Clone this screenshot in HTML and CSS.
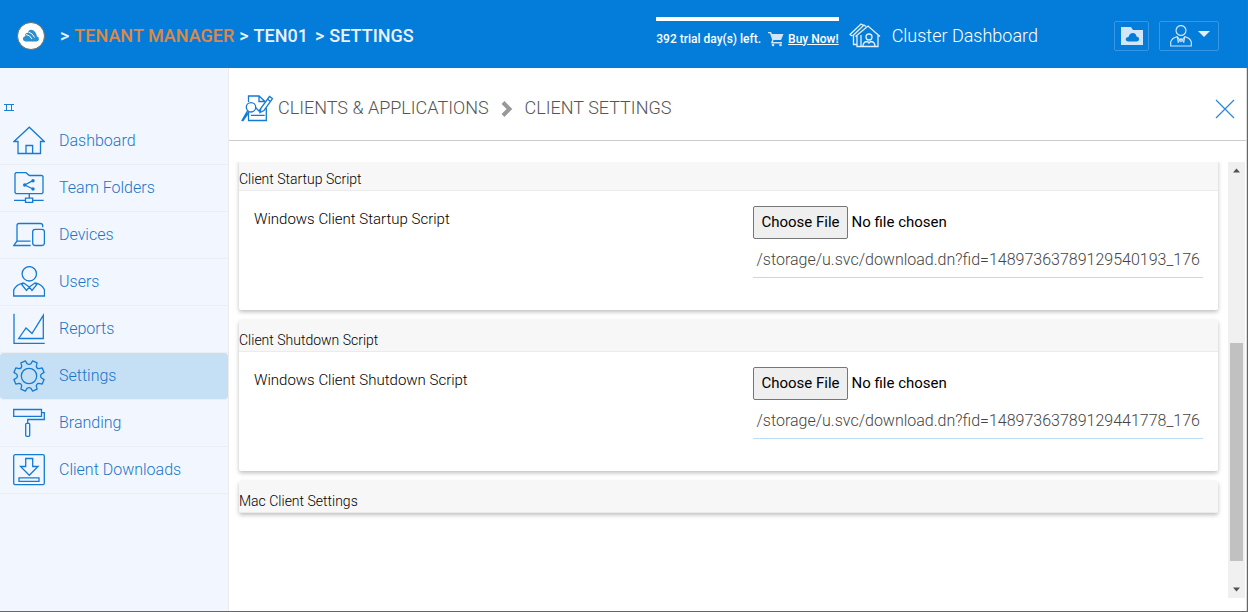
FILE: index.html
```html
<!DOCTYPE html>
<html lang="en">
<head>
<meta charset="utf-8">
<title>Tenant Manager - Client Settings</title>
<link rel="stylesheet" href="styles.css">
</head>
<body>
<header class="topbar">
  <svg class="logo" viewBox="0 0 28 28">
    <circle cx="14" cy="14" r="13.5" fill="#fff" stroke="#6b7469"/>
    <path d="M8.500 19.500Q5.800 19 5.800 16.700Q6 14.500 8.500 14Q7.500 12.500 9 11.300Q10 10.500 11.500 10.800Q10.500 9 13 8Q16.500 7.300 18.500 10.500Q19.700 12.300 19.800 14.300Q22 15 22 17.200Q21.800 19.300 19.500 19.500Z" fill="#2a8fcc"/>
    <path d="M9 12.500Q13 13 15 17M11.500 10Q16 11.500 17.500 15.500" fill="none" stroke="#fff"/>
  </svg>
  <nav class="crumbs">
    <span>&gt;</span>
    <a class="tenant" href="#">TENANT MANAGER</a>
    <span>&gt;</span>
    <a href="#">TEN01</a>
    <span class="last-sep">&gt;</span>
    <a href="#">SETTINGS</a>
  </nav>
  <div class="trial">
    <div class="trial-bar"></div>
    <div class="trial-info">
      <span>392 trial day(s) left.</span>
      <svg class="cart" viewBox="0 0 16 16" fill="#d3e6f7">
        <path d="M0 1H3L4 3H15.500L13 9H5.500L5 11H14V12.500H3.500L3 11.500L4.200 9L2 2.200H0Z"/>
        <circle cx="5" cy="14" r="1.300"/><circle cx="12.500" cy="14" r="1.300"/>
      </svg>
      <a href="#">Buy Now!</a>
    </div>
  </div>
  <a class="cluster" href="#">
    <svg viewBox="0 0 32 26" fill="none" stroke="#e3effa" stroke-width="1.300">
      <path d="M8 12V23.500H29V12M6.500 13.500L19 3L31 13.500M4.500 12V21.500H7.500M3 13L1 11.500L12 1L14.500 2.500M3.500 13L15 2L17 3.500M12 12V23M8 13V20"/>
      <circle cx="20" cy="14" r="3"/>
      <path d="M14 23.500Q14 18.500 18.500 18.500L20 20L21.500 18.500Q26 18.500 26 23.500"/>
    </svg>
    Cluster Dashboard
  </a>
  <div class="actions">
    <button class="top-btn folder-btn" aria-label="Cloud folder">
      <svg viewBox="0 0 22 18">
        <path d="M0 0H10L12 3H22V18H0Z" fill="#d3e6f7"/>
        <path d="M7 14.500Q4.500 14 4.700 12Q5 10 7.500 10Q8.500 6 12 6Q15 6.300 15.500 9.500Q18 9.500 18.200 12Q18 14.300 16 14.500Z" fill="#047cd9"/>
      </svg>
    </button>
    <button class="top-btn user-btn" aria-label="Account">
      <svg class="user" viewBox="0 0 32 32" fill="none" stroke="#d3e6f7" stroke-width="1.700">
        <circle cx="16" cy="8" r="7.200"/>
        <path d="M1 30.500V24.500Q3 19 10.500 17L16 24L21.500 17Q29 19 31 24.500V30.500ZM10.500 17L12 25L16 20L20 25L21.500 17"/>
      </svg>
      <svg class="caret" viewBox="0 0 12 6"><path d="M0 0H12L6 6Z" fill="#e3effa"/></svg>
    </button>
  </div>
</header>

<div class="page">
  <nav class="sidebar">
    <button class="toggle" aria-label="Toggle menu">
      <svg viewBox="0 0 10 7" fill="none" stroke="#1b7fd6"><path d="M0 .5H10M0 6.500H10M2.500 .5V6.500M7.500 .5V6.500"/></svg>
    </button>
    <a class="item" href="#">
      <svg viewBox="0 0 32 32"><path d="M5 16.500H1L16.300 2.200L31.300 16.500H27.500V28.500H5ZM13 28.500V20.500H19.600V28.500"/></svg>
      Dashboard
    </a>
    <a class="item" href="#">
      <svg viewBox="0 0 32 32"><path d="M3 .7H13L16.300 3.500H29L30 4.500V20.500L29 21.600H3L2 20.500V1.700ZM16.300 21.600V26M12.500 26.200H19.700V30.300H12.500ZM1 28.300H12.500M19.700 28.300H30.700M20 8.700L11.700 13L20 17"/><g fill="#147ad3" stroke="none"><circle cx="11.700" cy="13" r="1.700"/><circle cx="20" cy="8.700" r="1.700"/><circle cx="20" cy="17" r="1.700"/></g></svg>
      Team Folders
    </a>
    <a class="item" href="#">
      <svg viewBox="0 0 32 32"><path d="M29.700 8.300V6.500Q29.500 4.500 27.500 4.500H6Q4 4.500 4 6.500V22L.8 26.500H17.700M4 22.200H17.500"/><rect x="19.700" y="10.300" width="11.700" height="16.200" rx="2.500"/></svg>
      Devices
    </a>
    <a class="item" href="#">
      <svg viewBox="0 0 32 32"><circle cx="16.300" cy="7.800" r="7.200"/><path d="M10.300 16.800Q3 18.500 .7 24V30H31.500V24Q29.500 18.500 22.300 16.800M10.300 16.800L16.300 21L22.300 16.800M10.300 16.800L9 19L13.500 24.500L16.300 21L19 24.500L23.500 19L22.300 16.800"/></svg>
      Users
    </a>
    <a class="item" href="#">
      <svg viewBox="0 0 32 32"><path d="M1 .7V30.300H31.700M5.700 25.500L13 15L19 20.500L30.300 2.300V25.500Z"/></svg>
      Reports
    </a>
    <a class="item active" href="#">
      <svg viewBox="0 0 32 32"><path stroke-linejoin="round" d="M17.800 3.800L19.600 .9L24.100 2.800L23.300 6.100Q23.500 8.500 25.900 8.700L29.200 7.900L31.100 12.400L28.200 14.200Q27 16 28.200 17.800L31.100 19.600L29.200 24.100L25.900 23.300Q23.500 23.500 23.300 25.900L24.100 29.200L19.600 31.100L17.800 28.200Q16 27 14.200 28.200L12.400 31.100L7.900 29.200L8.700 25.900Q8.500 23.500 6.100 23.300L2.800 24.100L.9 19.600L3.800 17.800Q5 16 3.800 14.200L.9 12.400L2.800 7.900L6.100 8.700Q8.500 8.500 8.700 6.100L7.900 2.800L12.400 .9L14.200 3.800Q16 5 17.800 3.800Z"/><circle cx="16" cy="16" r="7.700"/></svg>
      Settings
    </a>
    <a class="item" href="#">
      <svg viewBox="0 0 32 32"><path d="M.7 2.500H28.500V9.300H.7ZM28.500 5.700H31.300V12.500H14.700V16.300"/><rect x="12.700" y="16.300" width="4" height="13" rx="1"/></svg>
      Branding
    </a>
    <a class="item" href="#">
      <svg viewBox="0 0 32 32"><rect x=".7" y=".7" width="30.600" height="30" rx="1.500"/><path d="M12.700 4.500H19.700V12.500H25L16.300 21.300L7.500 12.500H12.700ZM6 23.800H26V27.300H6Z"/></svg>
      Client Downloads
    </a>
  </nav>

  <main class="content">
    <div class="content-head">
      <svg class="head-icon" viewBox="0 0 32 28" fill="none" stroke="#147ad3" stroke-width="1.300">
        <path d="M7.500 7V1H18L24 6.500M18 1V6.500H24M25.300 13V25.500H7.500V17.500M10 20.300H23.700"/>
        <circle cx="10" cy="12.300" r="4.700"/>
        <path d="M6.500 16L.8 26M8 17L1.500 26" stroke-width="1.500"/>
        <path d="M19 17.500L20 13L28.500 1.500L31.500 3.700L23 15.500ZM26.500 4L29.500 6.500M14.500 12.500L18 16L20 13"/>
      </svg>
      <a href="#">CLIENTS &amp; APPLICATIONS</a>
      <svg class="chevron" viewBox="0 0 12 16"><path d="M2 1.500L8.500 8L2 14.500" fill="none" stroke="#999" stroke-width="4"/></svg>
      <h1>CLIENT SETTINGS</h1>
      <button class="close" aria-label="Close">
        <svg viewBox="0 0 20 20"><path d="M1 1L19 19M19 1L1 19" stroke="#2a86d8" stroke-width="1.200"/></svg>
      </button>
    </div>

    <div class="scroll-area">
      <div class="cards">
        <section class="card">
          <h2>Client Startup Script</h2>
          <div class="card-body">
            <label for="startup-file">Windows Client Startup Script</label>
            <div class="field">
              <input type="file" id="startup-file">
              <input type="text" aria-label="Startup script path" value="/storage/u.svc/download.dn?fid=14897363789129540193_176">
            </div>
          </div>
        </section>
        <section class="card">
          <h2>Client Shutdown Script</h2>
          <div class="card-body">
            <label for="shutdown-file">Windows Client Shutdown Script</label>
            <div class="field">
              <input type="file" id="shutdown-file">
              <input type="text" aria-label="Shutdown script path" value="/storage/u.svc/download.dn?fid=14897363789129441778_176">
            </div>
          </div>
        </section>
        <section class="card">
          <h2>Mac Client Settings</h2>
        </section>
      </div>
      <div class="scrollbar">
        <svg class="arrow" viewBox="0 0 17 17"><path d="M5 10.500L8.500 6.500L12 10.500Z" fill="#505050"/></svg>
        <div class="track">
          <div class="before"></div>
          <div class="thumb"></div>
          <div class="after"></div>
        </div>
        <svg class="arrow" viewBox="0 0 17 17"><path d="M5 6.500L8.500 10.500L12 6.500Z" fill="#505050"/></svg>
      </div>
    </div>
  </main>
</div>
</body>
</html>
```
FILE: styles.css
```css
* {
  box-sizing: border-box;
}
body {
  margin: 0;
  min-height: 100vh;
  display: flex;
  flex-direction: column;
  font-family: Roboto, sans-serif;
  font-weight: 300;
  font-size: 16px;
  color: #000;
  background: #fff;
  border-right: 1px solid #666;
  border-bottom: 1px solid #666;
}
a {
  color: inherit;
  text-decoration: none;
}
button {
  padding: 0;
  border: none;
  background: none;
  cursor: pointer;
}
svg {
  display: block;
  flex-shrink: 0;
}

/* top bar */
.topbar {
  display: flex;
  align-items: center;
  height: 68px;
  padding: 3px 28px 0 17px;
  background: #047cd9;
  color: #fff;
}
.logo {
  width: 28px;
  height: 28px;
}
.crumbs {
  flex: 1;
  display: flex;
  gap: 5px;
  margin-left: 15px;
  font-size: 18px;
  font-weight: 500;
  color: #e9f2fb;
  white-space: nowrap;
}
.crumbs .tenant {
  color: #e08744;
}
.crumbs .last-sep {
  margin-left: 2px;
}
.trial {
  font-size: 12px;
  font-weight: 500;
  line-height: 16px;
  white-space: nowrap;
}
.trial-bar {
  height: 4px;
  margin-bottom: 10px;
  background: #fff;
}
.trial-info {
  display: flex;
  align-items: center;
  padding-bottom: 8px;
}
.trial-info a {
  text-decoration: underline;
}
.cart {
  width: 16px;
  height: 16px;
  margin: 0 4px 0 7px;
}
.cluster {
  display: flex;
  align-items: center;
  gap: 11px;
  margin-left: 10px;
  font-size: 18px;
  white-space: nowrap;
}
.cluster svg {
  width: 32px;
  height: 26px;
}
.actions {
  display: flex;
  gap: 10px;
  margin-left: 76px;
}
.top-btn {
  display: flex;
  align-items: center;
  justify-content: center;
  height: 30px;
  border: 1px solid #3897e2;
  border-radius: 2px;
}
.folder-btn {
  width: 35px;
}
.folder-btn svg {
  width: 22px;
  height: 18px;
}
.user-btn {
  width: 60px;
  gap: 5px;
}
.user {
  width: 24px;
  height: 22px;
}
.caret {
  width: 12px;
  height: 6px;
  margin-bottom: 4px;
}

/* side menu */
.page {
  flex: 1;
  display: flex;
}
.sidebar {
  flex: 0 0 229px;
  padding-top: 36px;
  background: #f2f7ff;
  border-right: 1px solid #ebebeb;
}
.toggle {
  display: block;
  height: 7px;
  margin: 0 0 7px 4px;
}
.toggle svg {
  width: 10px;
  height: 7px;
}
.item {
  display: flex;
  align-items: center;
  gap: 14px;
  height: 47px;
  padding: 0 0 2px 13px;
  border-bottom: 1px solid #ebeef2;
  color: #1a74c8;
}
.item svg {
  width: 32px;
  height: 32px;
  margin-top: 2px;
  fill: none;
  stroke: #147ad3;
  stroke-width: 1.3px;
}
.item.active {
  background: #c5e0f5;
  border-radius: 4px;
}

/* main column */
.content {
  flex: 1;
  min-width: 0;
  display: flex;
  flex-direction: column;
  border-right: 1px solid #ddd;
}
.content-head {
  display: flex;
  align-items: center;
  height: 73px;
  padding: 6px 11px 0 12px;
  border-bottom: 1px solid #ccc;
  font-size: 18px;
  color: #555;
}
.head-icon {
  width: 32px;
  height: 28px;
  margin: 4px 5px 0 0;
}
.chevron {
  width: 12px;
  height: 16px;
  margin: 3px 12px 0;
}
.content-head h1 {
  margin: 0;
  font-size: 18px;
  font-weight: 300;
}
.close {
  margin: 4px 0 0 auto;
}
.close svg {
  width: 20px;
  height: 20px;
}
.scroll-area {
  flex: 1;
  display: flex;
  margin: 21px 1px 13px 0;
}
.cards {
  flex: 1;
  min-width: 0;
  padding: 0 10px;
  overflow: hidden;
}
.card {
  margin-bottom: 10px;
  border-radius: 2px;
  background: #fff;
  box-shadow: 0 2px 4px rgba(0,0,0,0.26);
}
/* list is scrolled a little past the first card's top edge */
.card:first-child {
  margin-top: -3px;
}
.card h2 {
  height: 32px;
  margin: 0;
  padding-top: 8px;
  background: #f7f7f7;
  border-bottom: 1px solid #ebebeb;
  font-size: 14px;
  font-weight: 300;
  line-height: 24px;
}
.card-body {
  display: grid;
  grid-template-columns: 10fr 9fr;
  min-height: 119px;
  padding: 15px;
  font-size: 15px;
}
.card-body label {
  line-height: 26px;
}
.field {
  display: flex;
  flex-direction: column;
}
.field input {
  width: 100%;
  font-family: inherit;
}
.field input[type="file"] {
  height: 33px;
  font-size: 15px;
  font-weight: 400;
}
.field input::file-selector-button {
  height: 33px;
  margin-right: 4px;
  padding: 0 7px 2px;
  border: 1px solid #767676;
  border-radius: 2px;
  background: #efefef;
  font: inherit;
}
.field input[type="text"] {
  height: 39px;
  padding: 2px 2px 0 3px;
  border: none;
  border-bottom: 1px solid #b9dcf7;
  outline: none;
  background: none;
  font-size: 16px;
  font-weight: 300;
  color: #444;
}

.scrollbar {
  display: flex;
  flex-direction: column;
  width: 17px;
  background: #f0f0f0;
}
.arrow {
  width: 17px;
  height: 17px;
}
.track {
  flex: 1;
  display: flex;
  flex-direction: column;
  padding: 0 2px;
}
.before {
  flex: 164;
}
.thumb {
  flex: 218;
  background: #c1c1c1;
}
.after {
  flex: 20;
}
```
